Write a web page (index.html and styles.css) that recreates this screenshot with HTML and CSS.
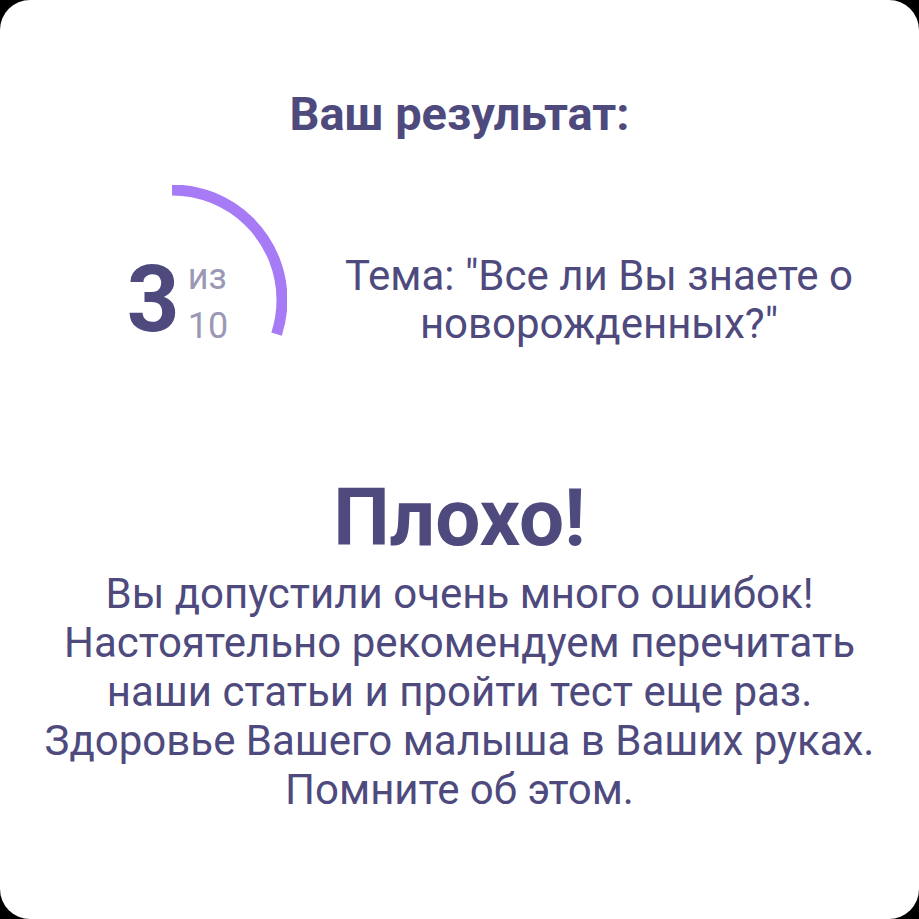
FILE: index.html
```html
<!DOCTYPE html>
<html lang="ru">
<head>
    <meta charset="UTF-8">
    <meta name="viewport" content="width=device-width, initial-scale=1.0">
    <title>Результат теста</title>
    <link rel="stylesheet" href="styles.css">
</head>
<body>

    <div class="card">
        <h1 class="title">Ваш результат:</h1>

        <!-- Score ring + quiz topic -->
        <div class="score-row">
            <div class="score">
                <svg class="ring" width="230" height="230" viewBox="0 0 230 230">
                    <!-- 3 of 10 => 30% of the circumference, starting from the top -->
                    <circle cx="115" cy="115" r="110" fill="none" stroke="#a77bf6" stroke-width="11"
                            stroke-dasharray="207.35 691.15" transform="rotate(-90 115 115)"/>
                </svg>
                <span class="score-value">3</span>
                <span class="score-total">
                    <span>из</span>
                    <span>10</span>
                </span>
            </div>
            <p class="topic">Тема: "Все ли Вы знаете о новорожденных?"</p>
        </div>

        <h2 class="verdict">Плохо!</h2>
        <p class="message">
            Вы допустили очень много ошибок!<br>
            Настоятельно рекомендуем перечитать<br>
            наши статьи и пройти тест еще раз.<br>
            Здоровье Вашего малыша в Ваших руках.<br>
            Помните об этом.
        </p>
    </div>

</body>
</html>
```

FILE: styles.css
```css
html, body {
    margin: 0;
    height: 100%;
    background: #000;
}
body {
    font-family: Roboto, "Noto Sans", sans-serif;
    color: #4e4a7e;
}
.card {
    box-sizing: border-box;
    height: 100%;
    background: #fff;
    border-radius: 30px;
    padding-top: 86px;
    text-align: center;
}
.title {
    margin: 0;
    font-size: 47px;
    font-weight: 700;
    line-height: 56px;
}
.score-row {
    display: flex;
    align-items: center;
    margin-top: 43px;
    padding-left: 57px;
}
.score {
    position: relative;
    width: 230px;
    height: 230px;
    display: flex;
    align-items: center;
    justify-content: center;
    padding-left: 11px;
    box-sizing: border-box;
}
.ring {
    position: absolute;
    left: 0;
    top: 0;
}
.score-value {
    font-size: 92px;
    font-weight: 700;
    line-height: 1;
}
.score-total {
    display: flex;
    flex-direction: column;
    margin-left: 8px;
    padding-top: 4px;
    font-size: 36px;
    line-height: 49px;
    color: #9b98b6;
    text-align: left;
}
.topic {
    flex: 1;
    margin: 0 51px 0 43px;
    font-size: 42px;
    line-height: 48px;
}
.verdict {
    margin: 58px 0 0;
    font-size: 80px;
    font-weight: 700;
    line-height: 90px;
}
.message {
    margin: 6px 0 0;
    font-size: 42px;
    line-height: 49px;
}
```
